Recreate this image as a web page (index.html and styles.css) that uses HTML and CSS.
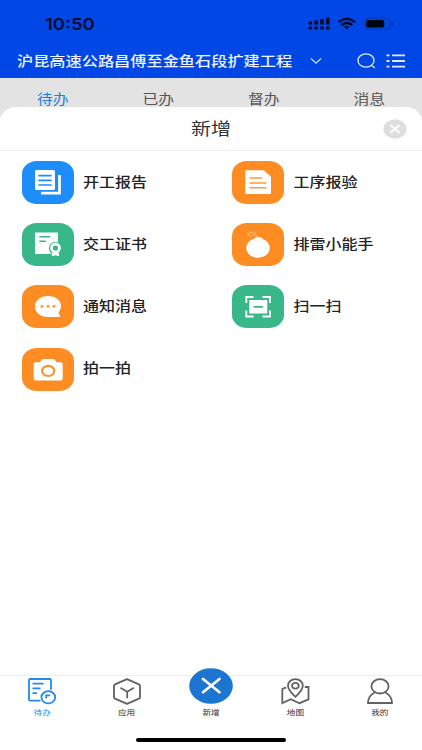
FILE: index.html
```html
<!DOCTYPE html>
<html lang="zh-CN">
<head>
    <meta charset="UTF-8">
    <meta name="viewport" content="width=device-width, initial-scale=1.0">
    <title>新增</title>
    <link rel="stylesheet" href="styles.css">
</head>
<body>
    <div class="app">
        <header class="header">
            <div class="status-bar">
                <span class="time">10:50</span>
                <svg class="status-icons" width="86" height="14" viewBox="0 0 86 14">
                    <g fill="#020b2c">
                        <rect x="0.5" y="4.5" width="3.6" height="3.2" rx="1"/><rect x="6.3" y="3.3" width="3.6" height="4.4" rx="1"/>
                        <rect x="12.2" y="1.9" width="3.6" height="5.8" rx="1"/><rect x="18" y="0.6" width="3.6" height="7.1" rx="1"/>
                        <rect x="0.5" y="9.4" width="3.6" height="3" rx="1"/><rect x="6.3" y="9.4" width="3.6" height="3" rx="1"/>
                        <rect x="12.2" y="9.4" width="3.6" height="3" rx="1"/><rect x="18" y="9.4" width="3.6" height="3" rx="1"/>
                    </g>
                    <g fill="none" stroke="#020b2c" stroke-width="2.4">
                        <path d="M30.5 5.1Q38.8-1.5 47.2 5.1"/>
                        <path d="M33.5 8Q38.8 3.9 44.2 8"/>
                    </g>
                    <path d="M36 9.9q2.8-1.8 5.6 0L38.8 12.2z" fill="#020b2c"/>
                    <rect x="56.6" y="1.2" width="25.6" height="11" rx="3.5" fill="none" stroke="#0536a8"/>
                    <rect x="58.2" y="2.9" width="18" height="7.7" rx="2" fill="#000411"/>
                    <path d="M83.7 5v4q1.5-.5 1.5-2t-1.5-2z" fill="#0536a8"/>
                </svg>
            </div>
            <div class="title-bar">
                <h1 class="project"><span class="squash">沪昆高速公路昌傅至金鱼石段扩建工程</span></h1>
                <svg class="chevron" width="12" height="8" viewBox="0 0 12 8"><path d="M1 1.5l5 4.6 5-4.6" fill="none" stroke="#d5e1ff" stroke-width="1.2"/></svg>
                <svg class="search" width="20" height="16" viewBox="0 0 20 16" fill="none" stroke="#e2eaff" stroke-width="1.3"><ellipse cx="9" cy="7.5" rx="8" ry="6.7"/><path d="M14.5 12.3l3.3 2.6"/></svg>
                <svg class="list" width="20" height="14" viewBox="0 0 20 14"><path d="M6 1.3h13M6 7h13M6 12.7h13M0.5 1.3h3M0.5 7h3M0.5 12.7h3" stroke="#e2eaff" stroke-width="1.8"/></svg>
            </div>
        </header>

        <nav class="tabs">
            <span class="tab active"><span class="squash">待办</span></span>
            <span class="tab"><span class="squash">已办</span></span>
            <span class="tab"><span class="squash">督办</span></span>
            <span class="tab"><span class="squash">消息</span></span>
        </nav>

        <main class="sheet">
            <div class="sheet-header">
                <h2 class="sheet-title"><span class="squash">新增</span></h2>
                <svg class="close" width="24" height="20" viewBox="0 0 24 20"><ellipse cx="12" cy="10" rx="11.6" ry="9.7" fill="#dedede"/><path d="M7.5 6.2l9 7.6M16.5 6.2l-9 7.6" stroke="#fff" stroke-width="1.8"/></svg>
            </div>

            <div class="menu">
                <div class="item">
                    <svg class="icon blue" viewBox="0 0 52 43">
                        <path d="M14.5 9h17q1.5 0 1.5 1.5v17q0 1.5-1.5 1.5h-17q-1.5 0-1.5-1.5v-17Q13 9 14.5 9z" fill="#fff"/>
                        <path d="M17 14.6h12M17 19.3h12M17 24h12" stroke="#1c8dfb" stroke-width="1.7" stroke-linecap="round"/>
                        <path d="M37.5 14v18.2H19" fill="none" stroke="#fff" stroke-width="2.7"/>
                    </svg>
                    <span class="name"><span class="squash">开工报告</span></span>
                </div>
                <div class="item">
                    <svg class="icon orange" viewBox="0 0 52 43">
                        <path d="M14.3 9.3h17.5l7.2 6.4V33H14.3q-1 0-1-1V10.3q0-1 1-1z" fill="#fff"/>
                        <path d="M17.5 17h12.8M17.5 22h17M17.5 26.8h17" stroke="#fd9c3d" stroke-width="1.5"/>
                    </svg>
                    <span class="name"><span class="squash">工序报验</span></span>
                </div>
                <div class="item">
                    <svg class="icon green" viewBox="0 0 52 43">
                        <path d="M13 9.4h23v21.7H13z" fill="#fff"/>
                        <path d="M17.3 13.7h11M17.3 18.3h6.5" stroke="#38b889" stroke-width="1.5"/>
                        <circle cx="33.5" cy="25.3" r="6.6" fill="#38b889"/>
                        <path d="M30.5 29l-.7 4.3 3.7-1 3.7 1-.7-4.3" fill="#fff"/>
                        <circle cx="33.5" cy="25" r="4" fill="none" stroke="#fff" stroke-width="2.8"/>
                    </svg>
                    <span class="name"><span class="squash">交工证书</span></span>
                </div>
                <div class="item">
                    <svg class="icon orange" viewBox="0 0 52 43">
                        <ellipse cx="26" cy="25" rx="11.7" ry="9.8" fill="#fff"/>
                        <path d="M22 16.5l1-2q3.5-1 7 0l1.3 3z" fill="#fff"/>
                        <path d="M22.2 17.7q4 1.5 8 0" fill="none" stroke="#fee0c0" stroke-width=".6"/>
                        <path d="M26.5 14.5q-1.5-3.3-5-2.8M20.5 8.7l-.6 2M15 10l3 1M15.4 13.1l2.4-.8M17.5 8.9l1 1.2M23 9.5l-1.2 1.2M19.3 12.7v1.3" fill="none" stroke="#ffd3a4" stroke-width="1"/>
                    </svg>
                    <span class="name"><span class="squash">排雷小能手</span></span>
                </div>
                <div class="item">
                    <svg class="icon orange" viewBox="0 0 52 43">
                        <path d="M26 11c7.5 0 13 4.4 13 10 0 2.6-1 4.8-2.6 6.5l2.1 4.5H26c-7.5 0-13-4.6-13-10.5S18.5 11 26 11z" fill="#fff"/>
                        <g fill="#fd9229"><circle cx="20" cy="21.3" r="1.4"/><circle cx="26" cy="21.3" r="1.4"/><circle cx="32" cy="21.3" r="1.4"/></g>
                    </svg>
                    <span class="name"><span class="squash">通知消息</span></span>
                </div>
                <div class="item">
                    <svg class="icon green" viewBox="0 0 52 43">
                        <path d="M14.3 18v-6h7.2M30.5 12H38v6M14.3 25.5v6h7.2M30.5 31.5H38v-6" fill="none" stroke="#fff" stroke-width="1.8"/>
                        <rect x="17.3" y="15" width="18" height="13.6" rx=".8" fill="#fff"/>
                        <path d="M21.5 21.8h9.5" stroke="#38b889" stroke-width="1.8"/>
                    </svg>
                    <span class="name"><span class="squash">扫一扫</span></span>
                </div>
                <div class="item">
                    <svg class="icon orange" viewBox="0 0 52 43">
                        <path d="M14 14.2h4l1.8-2.6q.4-.6 1.2-.6h10.5q.8 0 1.2.6l1.8 2.6h4q2.2 0 2.2 2v14.3q0 2-2.2 2H14q-2.3 0-2.3-2V16.2q0-2 2.3-2z" fill="#fff"/>
                        <ellipse cx="26.2" cy="22.9" rx="6.1" ry="5.1" fill="none" stroke="#fd9229" stroke-width="2.2"/>
                    </svg>
                    <span class="name"><span class="squash">拍一拍</span></span>
                </div>
            </div>
        </main>

        <footer class="bottom-nav">
            <div class="nav-item active">
                <svg class="nav-icon" viewBox="0 0 30 28" fill="none" stroke="#238bf0" stroke-width="1.8">
                    <path d="M13.5 22.6H3q-1 0-1-1V2q0-1 1-1h20q1 0 1 1v9.7M5.5 5.6h11M5.5 10.4h8M5.5 15.2h4.5"/>
                    <ellipse cx="21.3" cy="19.3" rx="6.9" ry="6.1"/>
                    <path d="M19.2 20.5v-3.2h4"/>
                </svg>
                <span class="squash">待办</span>
            </div>
            <div class="nav-item">
                <svg class="nav-icon" viewBox="0 0 30 28" fill="none" stroke="#626262" stroke-width="1.8" stroke-linejoin="round">
                    <path d="M15 1.2L27 6.4q1 .5 1 1.4v11.4q0 .9-1 1.4L15 25.8 3 20.6q-1-.5-1-1.4V7.8q0-.9 1-1.4z"/>
                    <path d="M8.5 9.8l6.7 3.9 6.7-3.9M15.2 13.7v6.5"/>
                </svg>
                <span class="squash">应用</span>
            </div>
            <div class="nav-item">
                <svg class="nav-add" viewBox="0 0 44 36">
                    <ellipse cx="22" cy="18" rx="21.8" ry="17.8" fill="#1d75d2"/>
                    <path d="M14 11l16.5 13.2M30.5 11L14 24.2" stroke="#fff" stroke-width="2.6" stroke-linecap="round"/>
                </svg>
                <span class="squash">新增</span>
            </div>
            <div class="nav-item">
                <svg class="nav-icon" viewBox="0 0 30 28" fill="none" stroke="#626262" stroke-width="1.8">
                    <path d="M15.4 18.8C11 14.7 8 11.5 8 7.7 8 3.9 11.3 1.1 15.4 1.1s7.4 2.8 7.4 6.6c0 3.8-3 7-7.4 11.1z"/>
                    <ellipse cx="15.4" cy="7.8" rx="3.4" ry="2.9"/>
                    <path d="M6.2 9.4L2.3 11v14l8.6-3.8 8.6 4 9-3.8V9h-3.7"/>
                </svg>
                <span class="squash">地图</span>
            </div>
            <div class="nav-item">
                <svg class="nav-icon" viewBox="0 0 30 28" fill="none" stroke="#626262" stroke-width="1.8">
                    <ellipse cx="15" cy="8.3" rx="8.6" ry="7.2"/>
                    <path d="M10 14.3Q3.5 17.3 2.9 25H27.1q-.6-7.7-7.1-10.7" stroke-linejoin="round"/>
                </svg>
                <span class="squash">我的</span>
            </div>
        </footer>
        <div class="home-area"><div class="home-indicator"></div></div>
    </div>
</body>
</html>
```
FILE: styles.css
```css
* { box-sizing: border-box; }
body { margin: 0; font-family: "Liberation Sans", "Noto Sans CJK SC", sans-serif; background: #fff; }
h1, h2 { margin: 0; font-weight: normal; }
svg { display: block; flex: none; }
.app { width: 422px; height: 750px; display: flex; flex-direction: column; overflow: hidden; background: #e3e3e3; }

/* wide lettering */
.squash { display: inline-block; transform: scaleY(0.84); white-space: nowrap; }

.header { height: 78px; background: #0047e5; color: #fff; }
.status-bar { height: 46px; display: flex; justify-content: space-between; padding: 1px 29px 0 45px; align-items: center; }
.time { font: 600 18.5px/20px Inter, sans-serif; color: #020b2c; transform: scaleY(0.86); }
.status-icons { margin-right: -1px; }
.title-bar { height: 30px; display: flex; align-items: center; padding-left: 17px; }
.project { font-size: 16.2px; line-height: 24px; font-weight: 500; color: #eef3ff; width: 293px; }
.search { margin-left: 35px; }
.list { margin-left: 9px; }

.tabs { height: 29px; display: flex; padding-top: 10px; font-size: 15.8px; line-height: 23px; color: #555; }
.tab { flex: 1; text-align: center; }
.tab.active { color: #1c7fdc; }

.sheet { flex: 1; background: #fff; border-radius: 17px 17px 0 0 / 14px 14px 0 0; }
.sheet-header { height: 44px; display: flex; align-items: center; padding: 0 15px 0 39px; border-bottom: 1px solid #eee; }
.sheet-title { flex: 1; text-align: center; font-size: 20px; line-height: 28px; color: #333; }
.menu { display: grid; grid-template-columns: 210.4px 1fr; row-gap: 19.2px; padding: 10px 0 0 22px; }
.item { display: flex; align-items: center; height: 43px; }
.icon { width: 52px; height: 43px; border-radius: 15px / 13px; }
.blue { background: #1c8dfb; }
.orange { background: #fd8d22; }
.green { background: #38b889; }
.name { margin-left: 9px; font-size: 16px; line-height: 24px; font-weight: 500; color: #222; }

.bottom-nav { display: flex; height: 63px; background: #fff; border-top: 1px solid #eee; }
.nav-item { flex: 1; display: flex; flex-direction: column; align-items: center; padding-top: 2px; font-size: 8.6px; line-height: 12px; color: #333; }
.nav-item.active { color: #238bf0; }
.nav-icon { width: 30px; height: 28px; }
.nav-add { width: 44px; height: 36px; margin: -10px 0 2px; }
.home-area { height: 12px; background: #fff; }
.home-indicator { width: 150px; height: 4px; margin: 0 auto; border-radius: 2px; background: #000; }
```
